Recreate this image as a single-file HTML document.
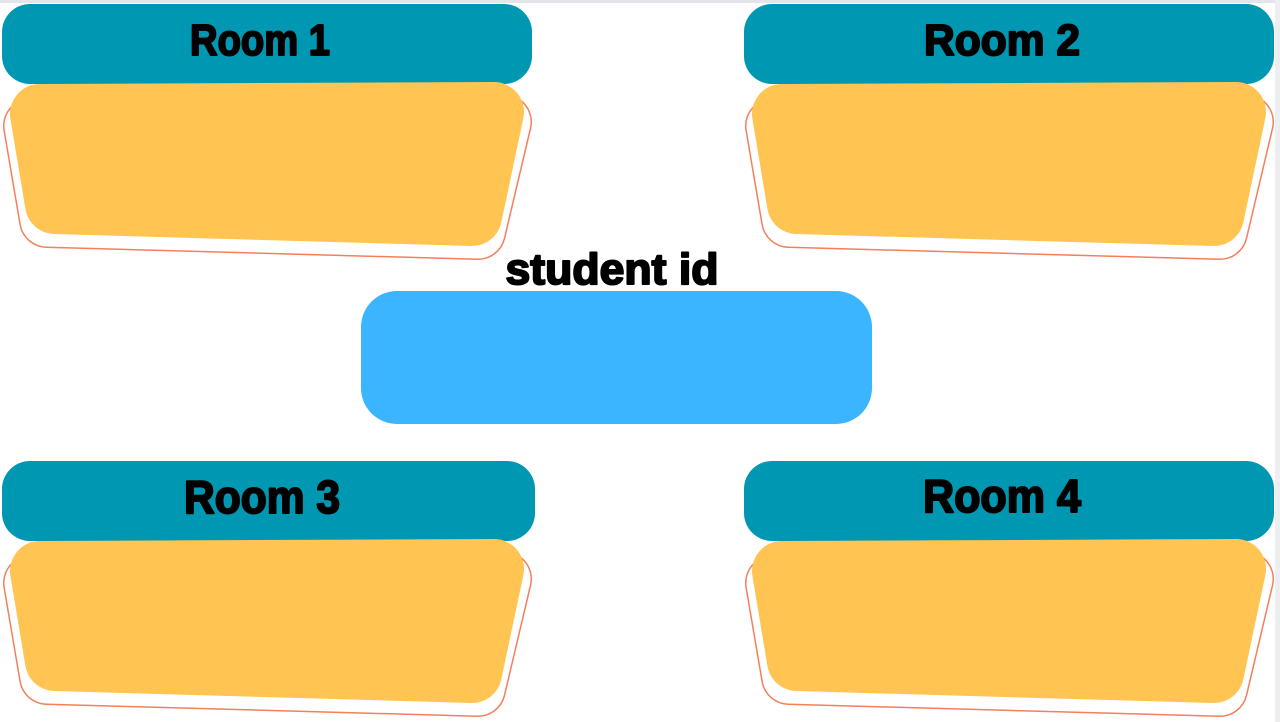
<!DOCTYPE html>
<html><head><meta charset="utf-8"><style>
html,body{margin:0;padding:0;background:#fff;}
svg{display:block}
text{font-family:"Liberation Sans",sans-serif;font-weight:bold;fill:#000;stroke:#000;stroke-width:2;stroke-linejoin:round}
</style></head><body>
<svg width="1280" height="722" viewBox="0 0 1280 722" xmlns="http://www.w3.org/2000/svg">
<rect x="0" y="0" width="1280" height="722" fill="#fff"/>
<rect x="0" y="0" width="1280" height="3" fill="#e3e5e8"/>
<rect x="1275" y="0" width="5" height="722" fill="#eceef0"/>
<defs>
<g id="box">
  <polygon points="31,126 504,122 478,232 47,220" fill="#fff" stroke="#f47f5a" stroke-width="56" stroke-linejoin="round"/>
  <polygon points="31,126 504,122 478,232 47,220" fill="#fff" stroke="#fff" stroke-width="53" stroke-linejoin="round"/>
  <polygon points="40,114 494,112 472,216 55,204" fill="#ffc451" stroke="#ffc451" stroke-width="60" stroke-linejoin="round"/>
</g>
</defs>
<!-- Room 1 -->
<rect x="2" y="4" width="530" height="80" rx="28" fill="#0097b2"/>
<use href="#box" x="0" y="0"/>
<text x="260" y="55" font-size="44" text-anchor="middle" textLength="140" lengthAdjust="spacingAndGlyphs">Room 1</text>
<!-- Room 2 -->
<rect x="744" y="4" width="530" height="80" rx="28" fill="#0097b2"/>
<use href="#box" x="742" y="0"/>
<text x="1002" y="55" font-size="44" text-anchor="middle" textLength="156" lengthAdjust="spacingAndGlyphs">Room 2</text>
<!-- Room 3 -->
<rect x="2" y="461" width="533" height="80" rx="28" fill="#0097b2"/>
<use href="#box" x="0" y="457"/>
<text x="262" y="513" font-size="46" text-anchor="middle" textLength="156" lengthAdjust="spacingAndGlyphs">Room 3</text>
<!-- Room 4 -->
<rect x="744" y="461" width="530" height="80" rx="28" fill="#0097b2"/>
<use href="#box" x="742" y="457"/>
<text x="1002" y="512" font-size="46" text-anchor="middle" textLength="158" lengthAdjust="spacingAndGlyphs">Room 4</text>
<!-- student id -->
<text x="612" y="284" font-size="44" text-anchor="middle" textLength="213" lengthAdjust="spacingAndGlyphs">student id</text>
<rect x="361" y="291" width="511" height="133" rx="36" fill="#3bb5ff"/>
</svg>
</body></html>
